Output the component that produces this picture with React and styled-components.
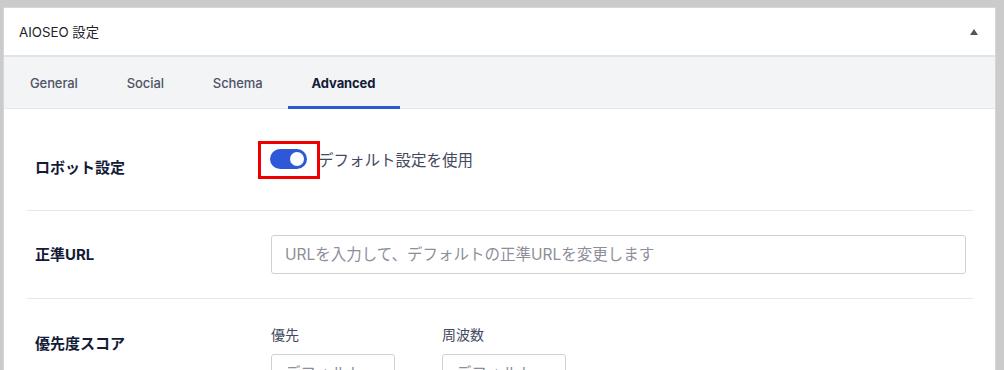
import React, { useState } from 'react';
import styled, { createGlobalStyle } from 'styled-components';

const Global = createGlobalStyle`
  html, body {
    margin: 0;
    padding: 0;
    background: #cbcbcb;
    overflow: hidden;
  }
  body {
    font-family: Inter, "Noto Sans CJK JP", sans-serif;
  }
  * { box-sizing: border-box; }
`;

const Page = styled.div`
  padding: 7px 8px 0 3px;
  height: 370px;
`;

const Panel = styled.div`
  background: #fff;
  border: 1px solid #d6d6d8;
  border-bottom: none;
  height: 363px;
  overflow: hidden;
`;

const Header = styled.div`
  height: 49px;
  display: flex;
  align-items: center;
  justify-content: space-between;
  padding: 0 17px 0 15px;
  border-bottom: 2px solid #e3e4e9;
  font-size: 13.3px;
  color: #1d2327;
`;

const Caret = styled.span`
  width: 0;
  height: 0;
  border-left: 4px solid transparent;
  border-right: 4px solid transparent;
  border-bottom: 6px solid #50575e;
`;

const TabBar = styled.div`
  display: flex;
  height: 52px;
  padding-left: 1px;
  background: #f3f4f5;
  border-bottom: 1px solid #e6e7ea;
`;

const Tab = styled.div`
  display: flex;
  align-items: center;
  padding: 0 25px 0 ${p => (p.$first ? '25px' : '24px')};
  font-size: 13px;
  letter-spacing: -0.1px;
  font-weight: ${p => (p.$active ? 700 : 500)};
  color: ${p => (p.$active ? '#141b38' : '#4d5366')};
  border-bottom: 3px solid ${p => (p.$active ? '#2c57d6' : 'transparent')};
  margin-bottom: -1px;
  padding-top: 2px;
`;

const Content = styled.div`
  padding: 0 22px 0 23px;
`;

const Row = styled.div`
  display: grid;
  grid-template-columns: 236px 1fr;
  align-items: ${p => p.$align || 'start'};
  padding: ${p => p.$pad} 7px ${p => p.$padBottom || '0'} 8px;
  border-bottom: ${p => (p.$last ? 'none' : '1px solid #e8e8eb')};
  min-height: ${p => p.$height || 'auto'};
`;

const Label = styled.div`
  font-size: 15px;
  font-weight: 700;
  line-height: 20px;
  color: #141b38;
  margin-top: ${p => p.$offset || '0'};
`;

const ToggleLine = styled.div`
  display: flex;
  align-items: center;
  height: 21px;
  font-size: 15.5px;
  color: #434960;
`;

const ToggleWrap = styled.div`
  position: relative;
  margin-left: -1px;
  margin-right: 11px;
`;

const Switch = styled.button`
  display: block;
  width: 37px;
  height: 20px;
  border: none;
  padding: 0;
  border-radius: 10px;
  background: ${p => (p.$on ? '#2d59d8' : '#c9cbd1')};
  position: relative;
  cursor: pointer;
  &::after {
    content: '';
    position: absolute;
    top: 3px;
    left: ${p => (p.$on ? '20px' : '3px')};
    width: 14px;
    height: 14px;
    border-radius: 50%;
    background: #fff;
  }
`;

const Highlight = styled.span`
  position: absolute;
  left: -12px;
  top: -8px;
  width: 62px;
  height: 38px;
  border: 3px solid #ee0000;
  pointer-events: none;
`;

const TextInput = styled.input`
  width: ${p => p.$width || '100%'};
  height: 39px;
  border: 1px solid #d0d1d7;
  border-radius: 3px;
  padding: 0 13px;
  font-family: Inter, "Noto Sans CJK JP", sans-serif;
  font-size: 15.5px;
  color: #141b38;
  outline: none;
  &::placeholder {
    color: #8c8f9a;
  }
`;

const Fields = styled.div`
  display: flex;
  gap: 47px;
`;

const Field = styled.div`
  display: flex;
  flex-direction: column;
  gap: 9px;
`;

const SubLabel = styled.div`
  font-size: 14px;
  line-height: 20px;
  color: #434960;
`;

export default function App() {
  const [robots, setRobots] = useState(true);
  const tabs = ['General', 'Social', 'Schema', 'Advanced'];

  return (
    <Page>
      <Global />
      <Panel>
        <Header>
          <span>AIOSEO 設定</span>
          <Caret />
        </Header>
        <TabBar>
          {tabs.map((t, i) => (
            <Tab key={t} $first={i === 0} $active={t === 'Advanced'}>{t}</Tab>
          ))}
        </TabBar>
        <Content>
          <Row $pad="39px" $height="102px">
            <Label $offset="10px">ロボット設定</Label>
            <ToggleLine>
              <ToggleWrap>
                <Switch $on={robots} onClick={() => setRobots(!robots)} />
                <Highlight />
              </ToggleWrap>
              デフォルト設定を使用
            </ToggleLine>
          </Row>
          <Row $pad="24px" $padBottom="24px" $align="center">
            <Label>正準URL</Label>
            <TextInput placeholder="URLを入力して、デフォルトの正準URLを変更します" />
          </Row>
          <Row $pad="26px" $last>
            <Label $offset="9px">優先度スコア</Label>
            <Fields>
              <Field>
                <SubLabel>優先</SubLabel>
                <TextInput $width="124px" placeholder="デフォルト" />
              </Field>
              <Field>
                <SubLabel>周波数</SubLabel>
                <TextInput $width="124px" placeholder="デフォルト" />
              </Field>
            </Fields>
          </Row>
        </Content>
      </Panel>
    </Page>
  );
}
